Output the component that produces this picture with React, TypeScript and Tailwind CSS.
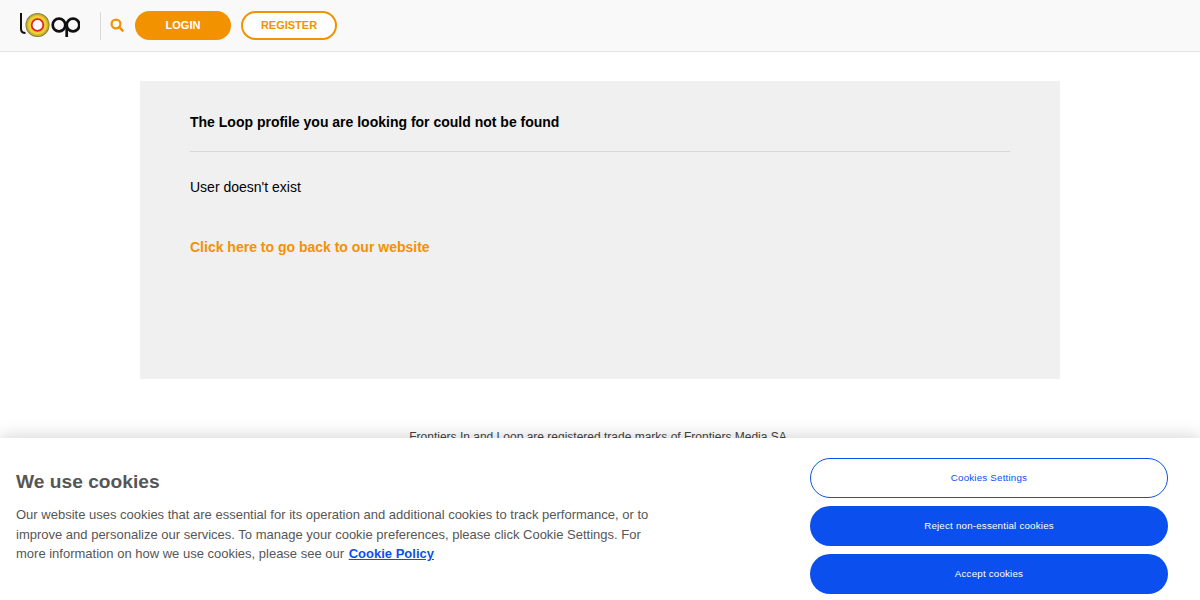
export default function App() {
  return (
    <div className="relative h-[600px] overflow-hidden bg-white font-['Liberation_Sans',Arial,sans-serif]">
      <header className="flex h-[52px] items-center border-b border-[#e3e3e3] bg-[#f9f9f9] pl-5">
        <svg width="60" height="28" viewBox="0 0 60 28" className="-mt-[3px]" aria-label="Loop">
          <defs>
            <radialGradient id="ring">
              <stop offset="45%" stopColor="#f7c41d" />
              <stop offset="72%" stopColor="#f0d335" />
              <stop offset="90%" stopColor="#b5a72c" />
              <stop offset="100%" stopColor="#6e6c2a" />
            </radialGradient>
          </defs>
          <path d="M1 3V19Q1 23 5.5 23" fill="none" stroke="#111" strokeWidth="2" />
          <circle cx="17.5" cy="15" r="12" fill="url(#ring)" />
          <circle cx="17.5" cy="15" r="5.8" fill="#fff" stroke="#e0232e" strokeWidth="1.8" />
          <circle cx="39" cy="15" r="6.3" fill="none" stroke="#111" strokeWidth="2.7" />
          <circle cx="53" cy="15" r="6.3" fill="none" stroke="#111" strokeWidth="2.7" />
          <path d="M46.7 14V27" fill="none" stroke="#111" strokeWidth="2.7" />
        </svg>
        <div className="ml-5 h-[28px] w-px bg-[#d8d8d8]" />
        <svg width="14" height="14" viewBox="0 0 14 14" className="ml-[9px] -mt-[2px]">
          <circle cx="6" cy="6" r="4.4" fill="none" stroke="#f39200" strokeWidth="2.2" />
          <path d="M9.2 9.2L12.6 12.6" stroke="#f39200" strokeWidth="2.6" strokeLinecap="round" />
        </svg>
        <button className="ml-[11px] h-[29px] w-[96px] rounded-full bg-[#f39200] text-[11px] font-bold text-white">LOGIN</button>
        <button className="ml-[10px] h-[29px] w-[96px] rounded-full border-2 border-[#f39200] bg-white text-[11px] font-bold text-[#f39200]">REGISTER</button>
      </header>

      <main className="mx-auto mt-[29px] h-[298px] w-[920px] bg-[#f0f0f0] px-[50px] pt-[31px]">
        <h1 className="border-b border-[#d8d8d8] pb-[19px] text-[14px] leading-[20px] font-bold text-black">
          The Loop profile you are looking for could not be found
        </h1>
        <p className="mt-[25px] text-[14px] leading-[20px] text-black">User doesn't exist</p>
        <a className="mt-[40px] block text-[14px] leading-[20px] font-bold text-[#f39200]">Click here to go back to our website</a>
      </main>

      <footer className="mt-[51px] pr-1 text-center text-[12px] leading-[14px] text-[#444]">
        Frontiers In and Loop are registered trade marks of Frontiers Media SA
      </footer>

      <section className="absolute inset-x-0 bottom-0 flex h-[162px] bg-white shadow-[0_0_18px_rgba(0,0,0,0.2)]">
        <div className="ml-4 w-[648px] shrink-0">
          <h2 className="mt-[32px] text-[19.2px] leading-[24px] font-bold text-[#565656]">We use cookies</h2>
          <p className="mt-[11px] text-[13px] leading-[19.5px] text-[#565656]">
            Our website uses cookies that are essential for its operation and additional cookies to track performance, or to improve and personalize our services. To manage your cookie preferences, please click Cookie Settings. For more information on how we use cookies, please see our{" "}
            <a className="ml-px font-bold text-[#0b50ee] underline">Cookie Policy</a>
          </p>
        </div>
        <div className="ml-[146px] mt-5 flex w-[358px] flex-col gap-2">
          <button className="h-10 rounded-full border border-[#0b50ee] bg-white text-[9.75px] tracking-[0.2px] text-[#0b50ee]">Cookies Settings</button>
          <button className="h-10 rounded-full bg-[#0b50ee] text-[9.75px] tracking-[0.2px] text-white">Reject non-essential cookies</button>
          <button className="h-10 rounded-full bg-[#0b50ee] text-[9.75px] tracking-[0.2px] text-white">Accept cookies</button>
        </div>
      </section>
    </div>
  );
}
